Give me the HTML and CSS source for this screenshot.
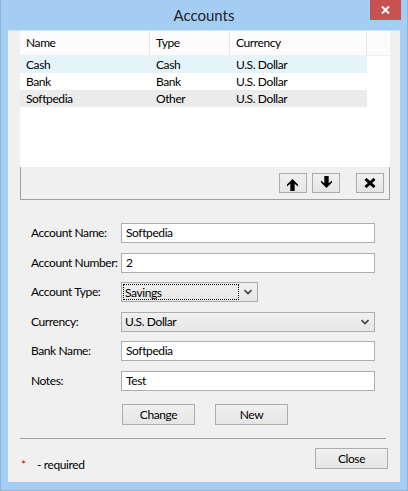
FILE: index.html
```html
<!DOCTYPE html>
<html>
<head>
<meta charset="utf-8">
<link rel="stylesheet" href="styles.css">
</head>
<body>
<div class="window">
  <div class="titlebar">
    <span></span>
    <span class="title">Accounts</span>
    <span class="close"><svg width="9" height="8" viewBox="0 0 9 8"><path d="M1 0.5 L8 7.5 M8 0.5 L1 7.5" stroke="#fff" stroke-width="2"/></svg></span>
  </div>
  <div class="client">
    <div class="listwrap">
      <div class="list">
        <div class="lhead">
          <div class="c1">Name</div><div class="c2">Type</div><div class="c3">Currency</div><div class="c4"></div>
        </div>
        <div class="lrow sel"><div class="c1">Cash</div><div class="c2">Cash</div><div class="c3">U.S. Dollar</div></div>
        <div class="lrow"><div class="c1">Bank</div><div class="c2">Bank</div><div class="c3">U.S. Dollar</div></div>
        <div class="lrow alt"><div class="c1">Softpedia</div><div class="c2">Other</div><div class="c3">U.S. Dollar</div></div>
      </div>
      <div class="toolbar">
        <button class="btn ibtn up"><svg width="11" height="12" viewBox="0 0 10 11"><path d="M5 0 L10 5 L10 6.8 L7 4.4 L7 11 L3 11 L3 4.4 L0 6.8 L0 5 Z" fill="#000"/></svg></button>
        <button class="btn ibtn down"><svg width="11" height="12" viewBox="0 0 10 11"><path d="M5 11 L10 6 L10 4.2 L7 6.6 L7 0 L3 0 L3 6.6 L0 4.2 L0 6 Z" fill="#000"/></svg></button>
        <button class="btn ibtn del"><svg width="12" height="10" viewBox="0 0 12 10"><path d="M1.5 1 L10.5 9 M10.5 1 L1.5 9" stroke="#000" stroke-width="3"/></svg></button>
      </div>
    </div>
    <div class="form">
      <label>Account Name:</label><div class="field">Softpedia</div>
      <label>Account Number:</label><div class="field">2</div>
      <label>Account Type:</label><div class="select short"><span class="focus">Savings</span><span class="chev"><svg width="8" height="6" viewBox="0 0 8 6"><path d="M0.5 1 L4 4.5 L7.5 1" fill="none" stroke="#444" stroke-width="1.6"/></svg></span></div>
      <label>Currency:</label><div class="select"><span class="val">U.S. Dollar</span><span class="chev"><svg width="8" height="6" viewBox="0 0 8 6"><path d="M0.5 1 L4 4.5 L7.5 1" fill="none" stroke="#444" stroke-width="1.6"/></svg></span></div>
      <label>Bank Name:</label><div class="field">Softpedia</div>
      <label>Notes:</label><div class="field">Test</div>
    </div>
    <div class="actions">
      <button class="btn wbtn">Change</button>
      <button class="btn wbtn">New</button>
    </div>
    <div class="sep"></div>
    <div class="footer">
      <div class="req"><span class="star">*</span><span>- required</span></div>
      <button class="btn wbtn">Close</button>
    </div>
  </div>
</div>
</body>
</html>
```
FILE: styles.css
```css
html, body {
  margin: 0;
  padding: 0;
}
body {
  width: 408px;
  height: 491px;
  overflow: hidden;
  font-family: "Lato", "Noto Sans", sans-serif;
  font-size: 12px;
  letter-spacing: -0.4px;
  color: #000;
}
.window {
  width: 408px;
  height: 491px;
  box-sizing: border-box;
  background: #a5cdf3;
  border: 1px solid #8db4dc;
  border-top: none;
  display: flex;
  flex-direction: column;
}
.titlebar {
  height: 30px;
  display: grid;
  grid-template-columns: 1fr auto 1fr;
  align-items: start;
}
.title {
  font-size: 15px;
  letter-spacing: 0;
  color: #222;
  line-height: 31px;
}
.close {
  justify-self: end;
  width: 31px;
  height: 20px;
  margin-right: 6px;
  background: #c75050;
  display: flex;
  align-items: center;
  justify-content: center;
}
.client {
  margin: 0 7px 0 7px;
  height: 452px;
  background: #f0f0f0;
  padding: 0 0 0 12px;
  box-sizing: border-box;
  border-top: 1px solid #d0e4f8;
}
.listwrap {
  width: 370px;
}
.list {
  height: 136px;
  background: #fff;
}
.lhead, .lrow {
  display: flex;
  white-space: nowrap;
}
.lhead {
  height: 24px;
  line-height: 24px;
  background: #fcfcfc;
  border-bottom: 1px solid #f0f0f0;
}
.lhead > div {
  border-right: 1px solid #e5e5e5;
  box-sizing: border-box;
}
.lhead .c4 {
  flex: 1;
  border-right: none;
}
.c1 { width: 130px; padding-left: 6px; box-sizing: border-box; }
.c2 { width: 80px; padding-left: 6px; box-sizing: border-box; }
.c3 { width: 137px; padding-left: 6px; box-sizing: border-box; }
.lrow {
  width: 347px;
  height: 17px;
  line-height: 17px;
}
.lrow.sel { background: #e5f3fb; }
.lrow.alt { background: #ebebeb; }
.toolbar {
  height: 33px;
  box-sizing: border-box;
  border: 1px solid #a0a0a0;
  border-top: none;
  display: flex;
  justify-content: flex-end;
  align-items: flex-start;
  padding: 6px 5px 0 0;
  gap: 5px;
}
.btn {
  font: inherit;
  letter-spacing: inherit;
  color: #000;
  border: 1px solid #acacac;
  background: linear-gradient(#f0f0f0, #e5e5e5);
  padding: 0;
  margin: 0;
  display: flex;
  align-items: center;
  justify-content: center;
}
.ibtn {
  width: 28px;
  height: 20px;
}
.ibtn.up svg {
  margin: 3px 1px 0 0;
}
.ibtn.down svg {
  margin: 0 0 3px 0;
}
.ibtn.del {
  margin-left: 11px;
}
.ibtn.del svg {
  margin: 0 0 1px 0;
}
.form {
  display: grid;
  grid-template-columns: 90px 254px;
  grid-auto-rows: 20px;
  row-gap: 9.6px;
  padding: 23px 0 0 11px;
  align-items: center;
  white-space: nowrap;
}
.form label {
  line-height: 20px;
}
.field {
  height: 20px;
  box-sizing: border-box;
  border: 1px solid #abadb3;
  background: #fff;
  padding-left: 4px;
  line-height: 18px;
}
.select {
  height: 20px;
  box-sizing: border-box;
  border: 1px solid #acacac;
  background: linear-gradient(#f0f0f0, #e6e6e6);
  display: flex;
  align-items: center;
  justify-content: space-between;
}
.select.short {
  width: 137px;
}
.select .val {
  padding-left: 3px;
}
.focus {
  border: 1px dotted #000;
  height: 16px;
  line-height: 15px;
  box-sizing: border-box;
  width: 116px;
  margin-left: 1px;
  padding-left: 1px;
}
.chev {
  width: 18px;
  display: flex;
  justify-content: center;
}
.actions {
  display: flex;
  gap: 20px;
  padding: 13px 0 0 102px;
}
.wbtn {
  width: 73px;
  height: 21px;
}
.sep {
  margin-top: 13px;
  width: 366px;
  border-top: 1px solid #a0a0a0;
}
.footer {
  display: flex;
  justify-content: space-between;
  align-items: flex-start;
  width: 368px;
  padding-top: 9px;
}
.req {
  display: flex;
  padding-top: 9px;
  padding-left: 1px;
}
.star {
  color: #e00000;
  width: 16px;
}
```
